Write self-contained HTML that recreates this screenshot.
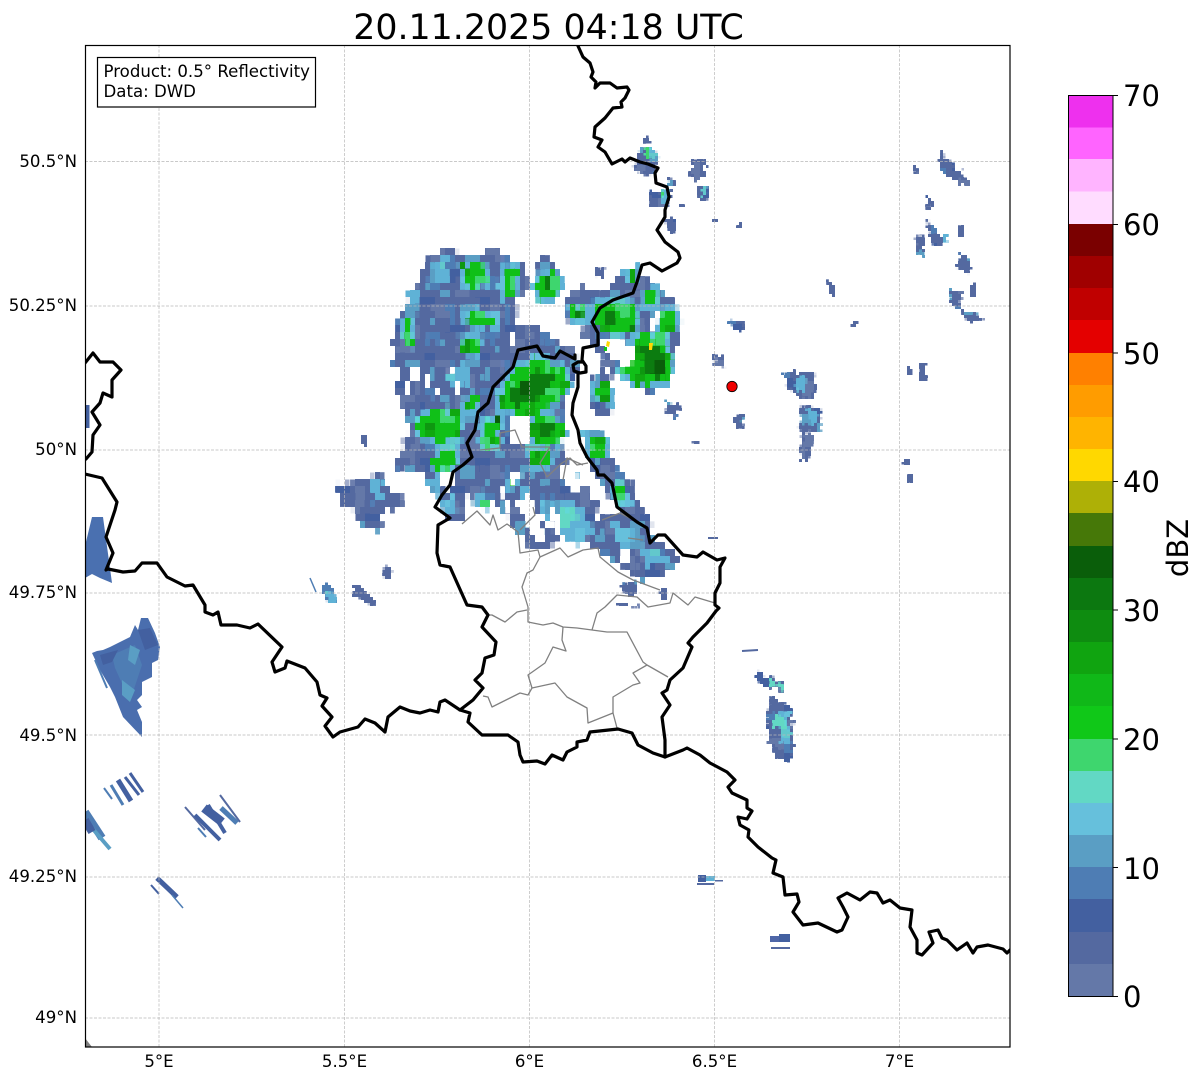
<!DOCTYPE html>
<html><head><meta charset="utf-8"><title>Radar</title>
<style>html,body{margin:0;padding:0;background:#fff}svg{display:block}text{font-family:"DejaVu Sans","Liberation Sans",sans-serif;fill:#000}</style></head>
<body>
<svg xmlns="http://www.w3.org/2000/svg" width="1202" height="1081" viewBox="0 0 1202 1081">
<defs>
<clipPath id="ax"><rect x="85" y="45" width="925" height="1002"/></clipPath>
<filter id="r" filterUnits="userSpaceOnUse" x="85" y="45" width="925" height="1002" color-interpolation-filters="sRGB">
<feTurbulence type="fractalNoise" baseFrequency="0.13" numOctaves="2" seed="7" result="n"/>
<feDisplacementMap in="SourceGraphic" in2="n" scale="11" xChannelSelector="R" yChannelSelector="G"/>
</filter>
<filter id="r2" filterUnits="userSpaceOnUse" x="85" y="45" width="925" height="1002" color-interpolation-filters="sRGB">
<feTurbulence type="fractalNoise" baseFrequency="0.25" numOctaves="1" seed="3" result="n"/>
<feDisplacementMap in="SourceGraphic" in2="n" scale="5" xChannelSelector="R" yChannelSelector="G"/>
</filter>
<filter id="px" filterUnits="userSpaceOnUse" x="85" y="45" width="925" height="1002" color-interpolation-filters="sRGB">
<feFlood x="87" y="48" width="1" height="1" flood-color="#000"/>
<feComposite x="85" y="45" width="5" height="7"/>
<feTile x="85" y="45" width="925" height="1002" result="a"/>
<feComposite in="SourceGraphic" in2="a" operator="in"/>
<feMorphology operator="dilate" radius="2 3"/>
</filter>
<filter id="px2" filterUnits="userSpaceOnUse" x="85" y="45" width="925" height="1002" color-interpolation-filters="sRGB">
<feFlood x="86" y="46" width="1" height="1" flood-color="#000"/>
<feComposite x="85" y="45" width="3" height="3"/>
<feTile x="85" y="45" width="925" height="1002" result="a"/>
<feComposite in="SourceGraphic" in2="a" operator="in"/>
<feMorphology operator="dilate" radius="1 1"/>
</filter>
<pattern id="b" patternUnits="userSpaceOnUse" width="56" height="54">
<rect width="56" height="54" fill="#5469a0"/>
<rect x="0" y="0" width="14" height="9" fill="#4360a0"/><rect x="21" y="0" width="7" height="18" fill="#6478a8"/>
<rect x="35" y="9" width="14" height="9" fill="#4e7db4"/><rect x="7" y="18" width="14" height="9" fill="#6478a8"/>
<rect x="28" y="27" width="14" height="9" fill="#4360a0"/><rect x="0" y="36" width="7" height="18" fill="#4e7db4"/>
<rect x="14" y="36" width="14" height="9" fill="#5a9ec4"/><rect x="42" y="36" width="14" height="9" fill="#6478a8"/>
<rect x="35" y="45" width="7" height="9" fill="#5a9ec4"/><rect x="49" y="18" width="7" height="9" fill="#5a9ec4"/>
</pattern>
<pattern id="c" patternUnits="userSpaceOnUse" width="42" height="36">
<rect width="42" height="36" fill="#5fb2d6"/>
<rect x="0" y="0" width="14" height="9" fill="#5a9ec4"/><rect x="21" y="9" width="14" height="9" fill="#62c8cc"/>
<rect x="7" y="18" width="7" height="18" fill="#5a9ec4"/><rect x="28" y="27" width="14" height="9" fill="#66c0dc"/>
</pattern>
<pattern id="g" patternUnits="userSpaceOnUse" width="35" height="27">
<rect width="35" height="27" fill="#10c018"/>
<rect x="0" y="0" width="14" height="9" fill="#10a810"/><rect x="21" y="9" width="14" height="9" fill="#3ed66e"/>
<rect x="7" y="18" width="7" height="9" fill="#0e9810"/>
</pattern>
<path id="gs" d="M497 397 515 371 535 358 560 365 570 385 560 396 540 412 520 414 500 410Z
M540 275 555 272 560 285 553 300 538 297 535 285Z
M464 314 477 310 497 318 494 328 470 326Z M462 340 480 337 478 354 462 352Z
M418 418 440 410 460 412 460 438 438 442 418 436Z M438 449 455 447 457 463 440 465Z
M482 420 498 418 500 445 484 447Z M530 422 548 415 563 425 560 443 535 445Z M528 450 548 447 550 463 532 467Z
M501 270 516 265 516 292 503 295Z M462 266 485 264 487 285 465 287Z M404 322 413 320 412 346 404 345Z
M432 458 448 452 450 470 435 472Z M466 398 478 395 477 410 466 410Z
M571 307 586 305 586 322 572 323Z M594 305 615 300 637 305 636 332 610 333 596 325Z
M658 312 676 310 677 332 660 333Z M625 350 640 332 662 335 673 362 668 382 640 386 622 375Z
M594 384 609 384 609 400 595 400Z M586 434 606 437 606 457 590 456Z M644 291 657 290 655 307 645 306Z
M627 270 637 268 636 283 628 283Z M508 480 512 475 516 484 512 488Z M478 500 482 495 487 506 482 508Z
M612 488 620 485 628 500 620 505Z M572 478 578 476 578 484 573 484Z"/>
<path id="ds" d="M506 395 525 377 549 372 556 382 536 400 516 405Z M538 425 552 420 556 436 542 440Z M643 348 660 345 670 365 660 380 646 372Z M576 310 584 312 582 320 577 320Z M606 312 618 312 618 325 606 325Z M630 320 636 322 636 332 628 330Z M545 279 552 282 550 293 544 292Z"/>
</defs>

<rect width="1202" height="1081" fill="#fff"/>
<text x="548.500" y="39" font-size="34.800" text-anchor="middle">20.11.2025 04:18 UTC</text>

<g clip-path="url(#ax)">
<!-- main radar mass -->
<g filter="url(#px)">
<g filter="url(#r)" fill="url(#b)">
<path d="M447 247 470 258 497 250 522 262 530 280 520 300 515 318 520 328 540 325 552 338 560 345 572 348 582 360 578 375 565 400 565 425 563 450 570 470 582 482 592 497 600 517 625 515 645 530 680 558 670 572 640 578 610 562 590 545 570 530 545 552 528 545 513 527 505 515 490 500 475 495 465 497 463 522 447 522 440 505 445 482 418 472 398 470 398 450 412 430 402 405 393 385 393 335 403 310 420 278 425 262Z"/>
<path d="M543 254 562 272 557 300 535 293 537 267Z"/>
<path d="M563 318 568 297 582 285 600 297 620 274 633 265 648 280 663 290 678 308 678 335 670 372 660 392 640 392 630 380 612 375 598 350 585 335Z"/>
<path d="M590 378 607 372 612 395 609 414 598 418 589 405Z"/>
<path d="M588 433 603 433 608 460 630 482 650 525 652 542 636 530 610 497 592 470 584 450Z"/>
<path d="M337 484 360 481 380 472 390 490 403 496 402 510 392 513 385 502 381 520 384 533 366 530 352 510 340 500Z"/>
</g>
<g filter="url(#r)">
<use href="#gs" fill="url(#c)" stroke="url(#c)" stroke-width="7"/>
<path d="M430 265 450 255 445 285 428 285Z M410 290 420 290 418 305 410 305Z M450 368 470 360 470 385 450 385Z M428 480 440 478 442 495 428 493Z M440 500 455 497 458 512 445 515Z M520 490 530 488 532 500 522 500Z M545 500 575 505 595 530 580 545 555 530 540 512Z M610 520 640 530 645 548 620 550Z M640 550 668 555 670 565 645 565Z M372 480 384 480 382 500 372 500Z" fill="url(#c)"/>
<path d="M558 506 575 512 570 530 556 524Z M598 438 604 438 604 450 598 450Z" fill="#62d8c4"/>
<use href="#gs" fill="url(#g)"/>
<use href="#ds" fill="#0c7c10"/>
</g>
<path d="M520 380 532 380 532 396 520 396Z M652 358 664 358 664 372 652 372Z M495 412 500 412 500 420 495 420Z" fill="#0a5e0a" filter="url(#r2)"/>
<g filter="url(#r2)" fill="#fff">
<path d="M508 420 528 415 530 440 512 445Z M508 333 514 328 516 342 510 344Z M600 340 612 338 632 345 636 362 620 365 610 358Z M648 318 660 314 656 328 650 328Z M448 365 453 366 451 374 447 374Z M435 385 441 385 441 395 435 395Z M412 370 420 370 420 380 412 380Z M456 380 461 380 461 392 456 392Z M510 472 520 470 524 482 512 482Z M552 505 560 520 558 528 548 510Z M515 500 530 495 545 540 536 540Z M625 548 632 546 628 565 618 560Z M560 465 575 470 582 490 565 490Z M440 478 448 470 455 480 448 490Z M604 552 618 566 612 564 602 556Z M500 490 504 488 512 508 508 510Z M538 517 542 515 560 531 556 534Z M395 368 401 368 401 378 395 378Z M405 382 411 382 411 392 405 392Z M424 372 430 372 430 385 424 385Z"/>
</g>
</g>
<path d="M607 341l3 1-1 5-3-1Z M649 343l4 0-1 7-3 0Z" fill="#ffd800"/>
<path d="M604 347l3 0 0 4-3 0Z" fill="#10c818"/>

<!-- small radar cells -->
<g filter="url(#px2)">
<g filter="url(#r)" fill="url(#b)">
<path d="M622 582 637 582 637 595 625 595Z M664 402 680 404 678 416 668 415Z M730 320 744 322 742 331 732 331Z M713 355 724 356 726 368 716 364Z M733 416 744 416 741 427 735 426Z"/>
<path d="M640 150 656 148 657 163 652 176 636 172 634 163Z M649 192 670 192 670 207 650 206Z M667 178 676 179 675 186 668 186Z M666 219 676 220 676 232 669 232Z M690 158 706 160 706 178 692 178Z M695 187 710 187 707 201 698 199Z"/>
<path d="M785 372 815 372 816 395 805 400 785 385Z M802 403 820 410 822 432 800 433Z M802 433 812 436 810 460 800 462Z"/>
<path d="M940 152 962 172 972 186 964 186 945 176 938 168Z M926 219 943 238 940 248 932 245Z M915 234 924 236 924 256 916 254Z M958 252 969 258 969 276 960 268Z M950 288 963 293 960 309 950 305Z M962 308 986 318 980 322 966 320Z M913 166 919 168 918 176 914 174Z M926 194 934 206 930 210 926 200Z"/>
<path d="M772 696 792 708 794 760 774 760 768 735 768 715Z M756 673 786 683 786 692 760 684Z"/>
</g>
<g filter="url(#r2)" fill="#5469a0">
<path d="M642 138 651 137 651 142 643 143Z M678 204 683 204 683 208 679 208Z M596 268 606 268 604 278 596 277Z M712 219 717 219 717 223 712 223Z M738 223 743 223 742 229 738 229Z M361 435 367 436 367 446 362 444Z M383 566 392 568 391 579 384 579Z M352 584 358 584 376 603 372 606 354 596Z M826 279 834 285 835 298 829 290Z M903 459 910 459 910 466 903 465Z M908 475 913 475 913 482 908 482Z M852 322 857 322 857 327 852 327Z M693 440 698 440 698 444 694 444Z M920 362 926 362 926 382 920 382Z M907 365 911 365 911 375 907 375Z M660 588 668 588 666 600 660 598Z M612 601 640 606 640 608 613 604Z M969 284 976 284 976 297 971 297Z M958 226 963 227 963 238 958 237Z"/>
<path d="M320 584 330 584 338 602 328 604Z" fill="#4e7db4"/>
</g>
<g filter="url(#r)">
<path d="M650 148 656 150 654 158 648 158Z M796 378 806 378 806 392 798 392Z M806 410 816 412 815 424 806 424Z M780 710 790 712 790 744 780 744Z M327 588 333 590 336 600 329 600Z M662 190 668 190 668 202 662 202Z M700 188 708 188 706 196 700 196Z M944 234 948 236 946 242 942 240Z" fill="url(#c)"/>
<path d="M772 714 786 716 786 728 774 728Z M770 680 785 686 784 690 770 685Z" fill="#62d8c4"/>
<path d="M645 150 652 150 650 158 645 158Z M660 192 665 192 665 198 660 198Z" fill="#3ed66e"/>
</g>
</g>

<!-- left streak areas -->
<path d="M85 546 92 517 103 517 112 583 100 578 92 574 85 578Z" fill="#4a70b0"/>
<g stroke-linecap="butt" fill="none" stroke="#4a70b0">
<path d="M87 405V428" stroke-width="5" stroke="#4360a0"/>
<path d="M104 788 112 799" stroke-width="2" stroke="#4e7db4"/>
<path d="M111 785 123 805" stroke-width="3" stroke="#4e7db4"/>
<path d="M118 780 131 801" stroke-width="5" stroke="#4360a0"/>
<path d="M125 777 139 795" stroke-width="3" stroke="#4360a0"/>
<path d="M130 773 143 792" stroke-width="3" stroke="#4360a0"/>
<path d="M85 812 102 838" stroke-width="8" stroke="#4e7db4"/>
<path d="M92 828 110 849" stroke-width="4" stroke="#5a9ec4"/>
<path d="M85 820 92 832" stroke-width="8" stroke="#4360a0"/>
<path d="M185 807 205 830" stroke-width="2" stroke="#5469a0"/>
<path d="M195 815 220 840" stroke-width="4" stroke="#4360a0"/>
<path d="M204 808 222 822" stroke-width="9" stroke="#4360a0"/>
<path d="M208 805 225 833" stroke-width="4" stroke="#4360a0"/>
<path d="M220 795 240 822" stroke-width="2" stroke="#5469a0"/>
<path d="M221 808 237 823" stroke-width="5" stroke="#4e7db4"/>
<path d="M198 828 206 837" stroke-width="2" stroke="#4e7db4"/>
<path d="M151 885 159 894" stroke-width="2" stroke="#4360a0"/>
<path d="M157 878 177 897" stroke-width="5" stroke="#4360a0"/>
<path d="M172 895 183 908" stroke-width="1.500" stroke="#4e7db4"/>
<path d="M310 578 316 592" stroke-width="1.500" stroke="#4e7db4"/>
<path d="M742 651 758 650" stroke-width="2" stroke="#5469a0"/>
<path d="M708 538 718 538" stroke-width="2" stroke="#5469a0"/>
</g>
<path d="M92 653 97 651 103 650 110 647 122 641 130 637 135 625 138 630 141 618 148 618 155 633 160 647 158 660 152 663 152 677 142 682 142 695 137 700 142 707 137 710 142 722 142 737 123 717 115 697 110 687 100 670Z" fill="#4a6eae"/>
<path d="M112 655 135 645 142 665 132 695 125 690 115 668Z" fill="#4e7db4"/>
<path d="M130 645 140 650 135 665 128 660Z M122 680 135 690 130 702 122 695Z" fill="#5a9ec4"/>
<path d="M138 630 150 628 158 645 145 650Z M100 655 118 650 112 662 103 665Z" fill="#4360a0"/>
<path d="M95 660 107 688" stroke="#4e7db4" stroke-width="2" fill="none"/>
<rect x="698" y="875" width="8" height="7" fill="#4360a0"/><rect x="706" y="876" width="9" height="5" fill="#5fb2d6"/><rect x="715" y="880" width="8" height="1.500" fill="#5469a0"/><rect x="697" y="883" width="17" height="2" fill="#5469a0"/>
<rect x="770" y="936" width="20" height="6" fill="#4e66a8"/><rect x="779" y="934" width="11" height="8" fill="#4360a0"/><rect x="771" y="947" width="19" height="2" fill="#5469a0"/>
<path d="M85 1038 92 1047H85Z" fill="#808080"/>

<!-- grid -->
<g stroke="#b8b8b8" stroke-width="0.700" stroke-dasharray="3 1.500" fill="none">
<path d="M159 45V1047M344.500 45V1047M529.500 45V1047M714.500 45V1047M899.500 45V1047"/>
<path d="M85 161.500H1010M85 306H1010M85 450H1010M85 593H1010M85 735H1010M85 877H1010M85 1018H1010"/>
</g>

<!-- gray borders -->
<g fill="none" stroke="#808080" stroke-width="1.300" stroke-linejoin="round">
<path d="M462 524 477 511 490 525 493 515 498 530 507 524 518 532 520 553 538 550 540 557 533 570 527 573 522 587 528 607 528 622 543 625 553 623 563 627 577 628 592 630 607 632 627 632 643 662 647 665 668 677"/>
<path d="M527 610 517 612 505 622 492 615 489 615"/>
<path d="M592 630 597 613 605 607 617 595 637 597 648 607 670 603 673 593 688 605 695 597 715 603"/>
<path d="M563 627 562 640 566 651 553 647 545 663 528 675 532 688 528 695 520 693 492 707 488 697 483 696"/>
<path d="M532 688 555 683 567 697 587 708 588 723 613 713 617 728"/>
<path d="M613 713 613 697 633 685 640 683 633 673 647 665"/>
<path d="M540 557 560 548 568 557 583 550 598 548 600 557 618 572 633 580 660 590"/>
<path d="M500 433 515 430 522 447 550 447 540 463 547 477 562 463 570 458 577 465 588 463"/>
<path d="M480 450 500 448 500 433"/>
<path d="M563 480 567 458 583 465"/>
<path d="M533 507 535 515 520 530"/>
<path d="M602 520 620 513 630 518 M628 538 643 540"/>
</g>

<!-- black borders -->
<g fill="none" stroke="#000" stroke-width="3.200" stroke-linejoin="round" stroke-linecap="round">
<path d="M578 46 583 57 590 63 593 72 591 77 596 82 595 88 600 83 610 83 617 88 627 87 629 90 625 98 621 102 622 107 613 108 605 118 595 127 594 137 602 140 598 147 605 152 612 164 622 159 625 162 630 158 640 162 648 164 658 168 655 173 656 183 667 187 669 197 665 210 665 217 657 230 665 242 678 252 680 258 677 263 662 271 650 263 642 265 637 282 633 293 613 300 600 308 592 322 598 333 598 345 583 348 582 360 586 366 586 372 580 373 574 371 573 365 578 362 582 362"/>
<path d="M578 373 578 387 573 403 572 415 578 430 580 443 587 457 597 470 598 475 604 475 612 483 617 507 637 522 647 528 650 543 658 535 665 535 683 555 697 557 703 552 717 560 725 558 720 567 720 583 715 593 715 605 719 608 716 611 707 623 693 637 688 643 692 647 683 668 670 680 667 690 662 693 670 705 662 717 665 740 665 757"/>
<path d="M575 355 575 359 560 351 555 358 543 356 537 346 518 350 513 367 493 387 488 403 478 412 475 430 467 443 472 457 463 465 453 472 450 485 442 495 435 507 450 518 438 525 437 553 440 565 450 567 467 605 482 607 488 615 482 627 496 642 494 655 485 658 482 673 475 680 483 688 473 700 460 710 445 700 440 702 438 712 430 710 420 713 410 711 400 707 388 717 385 732 375 723 365 719 358 727 340 732 333 737 325 726 332 717 322 706 327 698 320 695 317 682 305 668 287 661 285 668 275 672 272 662 282 647 258 624 250 628 237 625 221 625 218 612 213 615 205 612 205 605 193 585 185 586 167 577 157 563 142 563 135 571 123 572 108 569 106 570 113 553 106 537 115 510 117 502 102 478 85 474"/>
<path d="M85 363 93 353 100 362 113 362 121 370 112 380 112 397 103 393 100 403 92 412 100 425 93 435 92 452 86 459"/>
<path d="M460 710 470 713 468 722 482 735 497 735 508 735 518 742 520 755 523 762 537 761 545 764 552 755 563 760 567 752 577 747 577 742 587 740 590 732 618 729 632 733 638 745 653 753 665 757 683 750 687 748 700 755 710 763 727 772 735 780 728 787 732 793 747 800 747 808 752 811 747 819 738 817 740 825 749 830 748 837 758 847 772 858 776 860 773 873 783 877 785 895 797 894 799 902 793 912 803 925 818 923 837 932 842 930 848 917 843 907 838 898 847 893 860 900 870 892 877 893 883 903 890 900 900 908 912 910 910 927 917 940 917 953 922 955 933 943 929 932 938 930 942 938 947 940 957 950 967 943 973 953 977 947 988 945 1003 949 1007 953 1010 950"/>
</g>
<circle cx="732" cy="386.500" r="5.200" fill="#f00000" stroke="#000" stroke-width="0.800"/>
</g>

<rect x="85.500" y="45.500" width="924.500" height="1001.500" fill="none" stroke="#000" stroke-width="1.200"/>

<!-- info box -->
<rect x="97.500" y="57.500" width="218" height="49.500" fill="#fff" stroke="#000" stroke-width="1.200"/>
<text x="103.500" y="77" font-size="16.600">Product: 0.5° Reflectivity</text>
<text x="103.500" y="97" font-size="16.600">Data: DWD</text>

<!-- tick labels -->
<g font-size="16.600" text-anchor="end">
<text x="77" y="167">50.5°N</text><text x="77" y="311">50.25°N</text><text x="77" y="455">50°N</text><text x="77" y="598">49.75°N</text><text x="77" y="741">49.5°N</text><text x="77" y="882">49.25°N</text><text x="77" y="1023">49°N</text>
</g>
<g font-size="16.600" text-anchor="middle">
<text x="159" y="1067">5°E</text><text x="344.500" y="1067">5.5°E</text><text x="529.500" y="1067">6°E</text><text x="714.500" y="1067">6.5°E</text><text x="899.500" y="1067">7°E</text>
</g>

<!-- colorbar -->
<g shape-rendering="crispEdges">
<rect x="1069" y="95.500" width="44" height="32.500" fill="#ee30ee"/>
<rect x="1069" y="127.500" width="44" height="32.500" fill="#ff64ff"/>
<rect x="1069" y="159" width="44" height="33" fill="#ffb4ff"/>
<rect x="1069" y="191.500" width="44" height="33" fill="#ffdcff"/>
<rect x="1069" y="224" width="44" height="32" fill="#7a0000"/>
<rect x="1069" y="256" width="44" height="32" fill="#a00000"/>
<rect x="1069" y="288" width="44" height="32" fill="#c00000"/>
<rect x="1069" y="320" width="44" height="33" fill="#e40000"/>
<rect x="1069" y="353" width="44" height="32" fill="#ff8000"/>
<rect x="1069" y="385" width="44" height="32" fill="#ff9c00"/>
<rect x="1069" y="417" width="44" height="32" fill="#ffb400"/>
<rect x="1069" y="449" width="44" height="32" fill="#ffd800"/>
<rect x="1069" y="481" width="44" height="33" fill="#aeb006"/>
<rect x="1069" y="513" width="44" height="33" fill="#467808"/>
<rect x="1069" y="546" width="44" height="32" fill="#0a5e0a"/>
<rect x="1069" y="578" width="44" height="32" fill="#0c7810"/>
<rect x="1069" y="610" width="44" height="32" fill="#0e8c10"/>
<rect x="1069" y="642" width="44" height="32" fill="#10a410"/>
<rect x="1069" y="674" width="44" height="33" fill="#10b818"/>
<rect x="1069" y="706" width="44" height="33" fill="#10c818"/>
<rect x="1069" y="739" width="44" height="32" fill="#3ed66e"/>
<rect x="1069" y="771" width="44" height="32" fill="#62d8c4"/>
<rect x="1069" y="803" width="44" height="32" fill="#66c0dc"/>
<rect x="1069" y="835" width="44" height="32" fill="#5a9ec4"/>
<rect x="1069" y="867" width="44" height="32" fill="#4e7db4"/>
<rect x="1069" y="899" width="44" height="33" fill="#4360a0"/>
<rect x="1069" y="932" width="44" height="32" fill="#5469a0"/>
<rect x="1069" y="964" width="44" height="32.500" fill="#6478a8"/>
</g>
<rect x="1068.500" y="95.500" width="44.500" height="901" fill="none" stroke="#000" stroke-width="1"/>
<path d="M1113 95.500h5M1113 224.500h5M1113 353h5M1113 481.500h5M1113 610h5M1113 739h5M1113 867.500h5M1113 996.500h5" stroke="#000" stroke-width="1"/>
<g font-size="29">
<text x="1123" y="106">70</text><text x="1123" y="235">60</text><text x="1123" y="364">50</text><text x="1123" y="492">40</text><text x="1123" y="621">30</text><text x="1123" y="750">20</text><text x="1123" y="879">10</text><text x="1123" y="1007">0</text>
</g>
<text transform="translate(1188,548) rotate(-90)" font-size="29" text-anchor="middle">dBZ</text>
</svg>
</body></html>
